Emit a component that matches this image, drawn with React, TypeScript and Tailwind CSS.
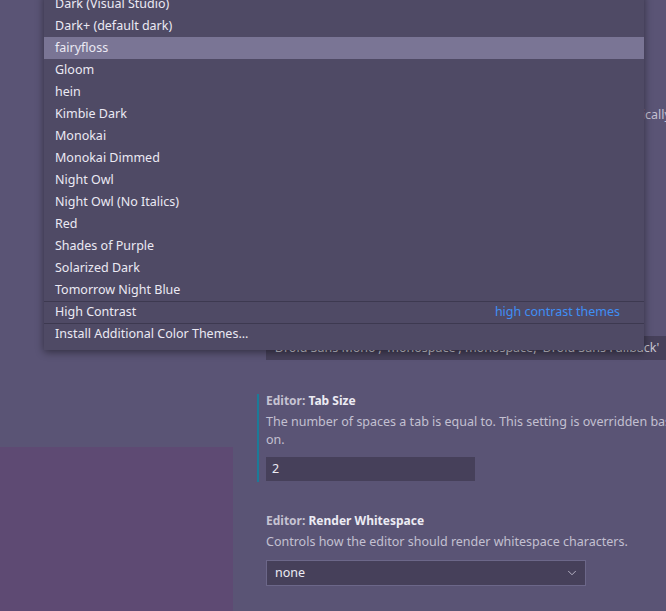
import { ChevronDown } from 'lucide-react'

const themes = [
  'Dark (Visual Studio)',
  'Dark+ (default dark)',
  'fairyfloss',
  'Gloom',
  'hein',
  'Kimbie Dark',
  'Monokai',
  'Monokai Dimmed',
  'Night Owl',
  'Night Owl (No Italics)',
  'Red',
  'Shades of Purple',
  'Solarized Dark',
  'Tomorrow Night Blue',
]

const font = { fontFamily: '"Noto Sans", "Open Sans", sans-serif' }

function ThemePicker() {
  return (
    <div className="absolute left-[44px] top-[-7px] w-[600px] bg-[#4f4a65] pb-[5px] text-[12.5px] text-[#ebe9f3] shadow-[0_2px_8px_rgba(0,0,0,0.45)]">
      {themes.map((t) => (
        <div
          key={t}
          className={`flex h-[22px] items-center px-[11px] ${t === 'fairyfloss' ? 'bg-[#7a7595]' : ''}`}
        >
          {t}
        </div>
      ))}
      <div className="flex h-[22px] items-center justify-between border-t border-[#3d3950] px-[11px]">
        <span>High Contrast</span>
        <span className="pr-[13px] text-[#3f8ff5]">high contrast themes</span>
      </div>
      <div className="flex h-[22px] items-center border-t border-[#3d3950] px-[11px]">
        Install Additional Color Themes...
      </div>
    </div>
  )
}

export default function App() {
  return (
    <div
      className="relative flex h-[611px] w-[666px] overflow-hidden bg-[#5a5475] text-[12.5px] text-[#c3c0d1]"
      style={font}
    >
      <div className="flex w-[233px] shrink-0 flex-col">
        <div className="flex-1" />
        <div className="h-[164px] bg-[#5e4a73]" />
      </div>

      <div className="min-w-0 flex-1 pl-[24px]">
        <div className="mt-[105px] flex whitespace-nowrap pl-[9px] leading-[20px]">
          <span className="w-[379px] shrink-0 overflow-hidden text-right">
            Controls whether the editor font size is adjusted automati
          </span>
          <span>cally</span>
        </div>

        <div className="mt-[211px] pl-[9px]">
          <div className="flex h-[24px] items-center whitespace-nowrap bg-[#46405a] px-[6px] text-[#c8c6d2]">
            'Droid Sans Mono', 'monospace', monospace, 'Droid Sans Fallback'
          </div>
        </div>

        <div className="mt-[34px] border-l-2 border-[#1b7b98] pb-[1px] pl-[7px] pt-[1px]">
          <div className="text-[12px] leading-[12px] font-bold">
            <span className="text-[#c6c3d2]">Editor: </span>
            <span className="text-[#ecebf3]">Tab Size</span>
          </div>
          <p className="mt-[6px] whitespace-nowrap leading-[18px]">
            The number of spaces a tab is equal to. This setting is overridden based on the file
            contents when `Editor: Detect Indentation` is
            <br />
            on.
          </p>
          <div className="mt-[8px] flex h-[24px] w-[209px] items-center bg-[#46405a] px-[6px] text-[#ecebf3]">
            2
          </div>
        </div>

        <div className="mt-[33px] pl-[9px]">
          <div className="text-[12px] leading-[12px] font-bold">
            <span className="text-[#c6c3d2]">Editor: </span>
            <span className="text-[#ecebf3]">Render Whitespace</span>
          </div>
          <p className="mt-[6px] leading-[18px]">
            Controls how the editor should render whitespace characters.
          </p>
          <div className="mt-[9px] flex h-[26px] w-[320px] items-center justify-between border border-[#6c6789] bg-[#46405a] pl-[8px] pr-[6px] text-[#ecebf3]">
            <span>none</span>
            <ChevronDown size={14} strokeWidth={1.5} className="text-[#c3c0d1]" />
          </div>
        </div>
      </div>

      <ThemePicker />
    </div>
  )
}
